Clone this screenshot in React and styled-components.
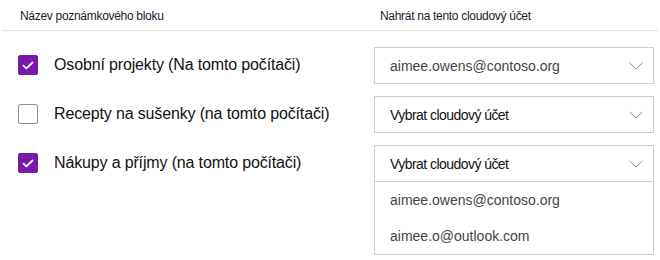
import React from "react";
import styled, { createGlobalStyle } from "styled-components";

const GlobalStyle = createGlobalStyle`
  body {
    margin: 0;
    background: #ffffff;
    font-family: "Liberation Sans", Arial, sans-serif;
  }
`;

const notebooks = [
  {
    name: "Osobní projekty (Na tomto počítači)",
    checked: true,
    account: "aimee.owens@contoso.org",
  },
  { name: "Recepty na sušenky (na tomto počítači)", checked: false, account: null },
  { name: "Nákupy a příjmy (na tomto počítači)", checked: true, account: null, open: true },
];

const accounts = ["aimee.owens@contoso.org", "aimee.o@outlook.com"];

export default function App() {
  return (
    <Page>
      <GlobalStyle />
      <HeaderRow>
        <HeaderCell>Název poznámkového bloku</HeaderCell>
        <HeaderCell $right>Nahrát na tento cloudový účet</HeaderCell>
      </HeaderRow>
      <List>
        {notebooks.map((nb) => (
          <Row key={nb.name}>
            <NameCell>
              <Checkbox $checked={nb.checked}>
                {nb.checked && (
                  <svg width="12" height="9" viewBox="0 0 12 9">
                    <path
                      d="M1.5 4.6 L4.4 7.3 L10.5 1.5"
                      fill="none"
                      stroke="#fff"
                      strokeWidth="1.8"
                      strokeLinecap="round"
                      strokeLinejoin="round"
                    />
                  </svg>
                )}
              </Checkbox>
              <Label>{nb.name}</Label>
            </NameCell>
            <Select $open={nb.open}>
              <SelectHead>
                <SelectValue $placeholder={!nb.account}>
                  {nb.account || "Vybrat cloudový účet"}
                </SelectValue>
                <svg width="14" height="8" viewBox="0 0 14 8">
                  <path d="M0.5 0.8 L7 7 L13.5 0.8" fill="none" stroke="#8a8a8a" strokeWidth="1" />
                </svg>
              </SelectHead>
              {nb.open && (
                <Options>
                  {accounts.map((a) => (
                    <Option key={a}>{a}</Option>
                  ))}
                </Options>
              )}
            </Select>
          </Row>
        ))}
      </List>
    </Page>
  );
}

const Page = styled.div`
  width: 656px;
  margin-left: 2px;
`;

const HeaderRow = styled.div`
  display: grid;
  grid-template-columns: 372px 1fr;
  height: 30px;
  align-items: center;
  border-bottom: 1px solid #e3e3e3;
`;

const HeaderCell = styled.div`
  font-size: 12px;
  letter-spacing: -0.3px;
  color: #1a1a2a;
  padding-left: ${(p) => (p.$right ? "6px" : "18px")};
  padding-top: 2px;
`;

const List = styled.div`
  display: flex;
  flex-direction: column;
  gap: 12px;
  padding-top: 16px;
`;

const Row = styled.div`
  display: grid;
  grid-template-columns: 372px 280px;
  align-items: start;
`;

const NameCell = styled.div`
  display: flex;
  align-items: center;
  height: 36px;
  padding-left: 16px;
  gap: 16px;
`;

const Checkbox = styled.span`
  box-sizing: border-box;
  width: 20px;
  height: 20px;
  border-radius: 2px;
  display: flex;
  align-items: center;
  justify-content: center;
  background: ${(p) => (p.$checked ? "#7719aa" : "#ffffff")};
  border: 1px solid ${(p) => (p.$checked ? "#7719aa" : "#8f8f8f")};
`;

const Label = styled.span`
  font-size: 16px;
  letter-spacing: -0.15px;
  color: #111111;
`;

const Select = styled.div`
  box-sizing: border-box;
  border: 1px solid #cdcdcd;
  background: #ffffff;
`;

const SelectHead = styled.div`
  display: flex;
  align-items: center;
  justify-content: space-between;
  height: 35px;
  padding: 0 10px 0 15px;
  border-bottom: 1px solid #cdcdcd;
  margin-bottom: -1px;
`;

const SelectValue = styled.span`
  font-size: 14px;
  color: ${(p) => (p.$placeholder ? "#111111" : "#444444")};
  letter-spacing: ${(p) => (p.$placeholder ? "-0.55px" : "0")};
`;

const Options = styled.div`
  display: flex;
  flex-direction: column;
  padding-top: 1px;
`;

const Option = styled.div`
  height: 36px;
  display: flex;
  align-items: center;
  padding-left: 15px;
  font-size: 14px;
  color: #444444;
`;
